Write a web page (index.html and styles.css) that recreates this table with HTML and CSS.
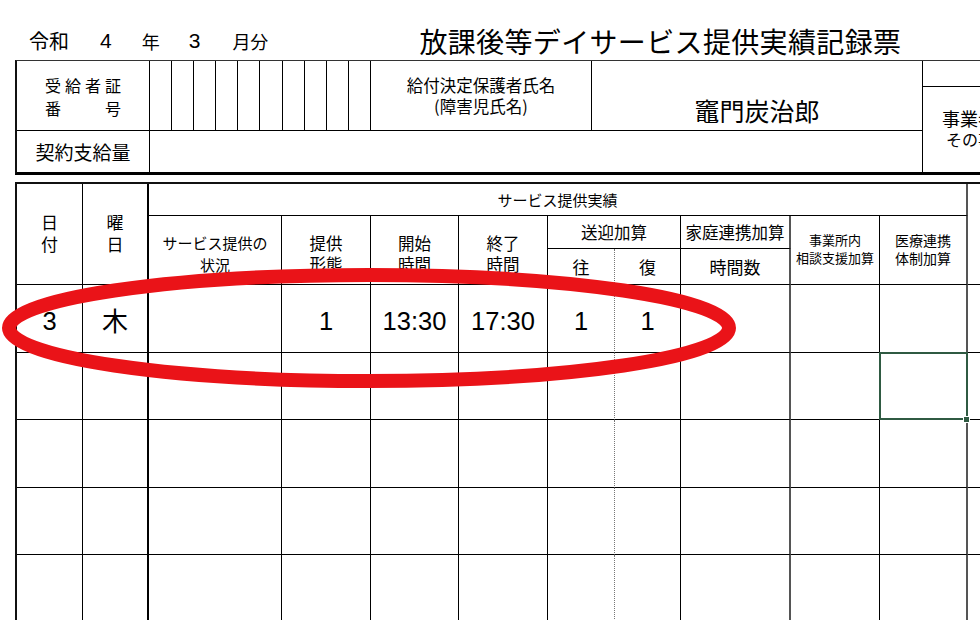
FILE: index.html
```html
<!DOCTYPE html>
<html lang="ja">
<head>
<meta charset="utf-8">
<title>放課後等デイサービス提供実績記録票</title>
<link rel="stylesheet" href="styles.css">
</head>
<body>
<div class="page">
  <div class="titlebar">
    <span class="era">令和</span>
    <span class="num n1">4</span>
    <span class="unit u1">年</span>
    <span class="num n2">3</span>
    <span class="unit u2">月分</span>
    <span class="title">放課後等デイサービス提供実績記録票</span>
  </div>

  <div class="info">
    <div class="cell lbl">
      <div class="just"><span>受</span><span>給</span><span>者</span><span>証</span></div>
      <div class="just"><span>番</span><span>号</span></div>
    </div>
    <div class="cell dg"></div><div class="cell dg"></div><div class="cell dg"></div><div class="cell dg"></div><div class="cell dg"></div>
    <div class="cell dg"></div><div class="cell dg"></div><div class="cell dg"></div><div class="cell dg"></div><div class="cell dg"></div>
    <div class="cell guard"><div>給付決定保護者氏名</div><div>(障害児氏名)</div></div>
    <div class="cell name">竈門炭治郎</div>
    <div class="cell side">
      <div class="side-top"></div>
      <div class="side-body"><div>事業者及び</div><div class="l2">その事業所</div></div>
    </div>
    <div class="cell lbl2">契約支給量</div>
    <div class="cell amount"></div>
  </div>

  <div class="grid">
    <div class="h hday"><div>日</div><div>付</div></div>
    <div class="h hwk"><div>曜</div><div>日</div></div>
    <div class="h hsvc">サービス提供実績</div>
    <div class="h hx"></div>
    <div class="h hst"><div>サービス提供の</div><div>状況</div></div>
    <div class="h h2 col4"><div>提供</div><div>形態</div></div>
    <div class="h h2 col5"><div>開始</div><div>時間</div></div>
    <div class="h h2 col6"><div>終了</div><div>時間</div></div>
    <div class="h hsg">送迎加算</div>
    <div class="h hkt">家庭連携加算</div>
    <div class="h hsm col10"><div>事業所内</div><div>相談支援加算</div></div>
    <div class="h hsm2 col11"><div>医療連携</div><div>体制加算</div></div>
    <div class="h h3 col7">往</div>
    <div class="h h3 col8">復</div>
    <div class="h h3 col9">時間数</div>

    <div class="d num-l">3</div><div class="d k jp-l">木</div><div class="d"></div><div class="d num-l">1</div><div class="d num-l">13:30</div><div class="d num-l">17:30</div><div class="d dt num-l">1</div><div class="d num-l">1</div><div class="d gr"></div><div class="d"></div><div class="d gr"></div><div class="d last"></div>

    <div class="d"></div><div class="d k"></div><div class="d"></div><div class="d"></div><div class="d"></div><div class="d"></div><div class="d dt"></div><div class="d"></div><div class="d gr"></div><div class="d"></div><div class="d gr sel"></div><div class="d last"></div>

    <div class="d"></div><div class="d k"></div><div class="d"></div><div class="d"></div><div class="d"></div><div class="d"></div><div class="d dt"></div><div class="d"></div><div class="d gr"></div><div class="d"></div><div class="d gr"></div><div class="d last"></div>

    <div class="d"></div><div class="d k"></div><div class="d"></div><div class="d"></div><div class="d"></div><div class="d"></div><div class="d dt"></div><div class="d"></div><div class="d gr"></div><div class="d"></div><div class="d gr"></div><div class="d last"></div>

    <div class="d"></div><div class="d k"></div><div class="d"></div><div class="d"></div><div class="d"></div><div class="d"></div><div class="d dt"></div><div class="d"></div><div class="d gr"></div><div class="d"></div><div class="d gr"></div><div class="d last"></div>
  </div>

  <svg class="mark" width="980" height="620" viewBox="0 0 980 620" aria-hidden="true">
    <ellipse cx="369" cy="328" rx="360" ry="53" fill="none" stroke="#ea1318" stroke-width="14"/>
  </svg>
</div>
</body>
</html>
```

FILE: styles.css
```css
* { box-sizing: border-box; }
html, body {
  margin: 0;
  padding: 0;
  width: 980px;
  height: 620px;
  overflow: hidden;
  background: #fff;
}
body {
  font-family: "Liberation Sans", "Noto Sans CJK JP", sans-serif;
  color: #000;
}
.page {
  position: relative;
  width: 980px;
  height: 620px;
  overflow: hidden;
}

/* title line */
.titlebar {
  height: 60px;
  padding: 21px 0 0 29px;
  display: flex;
  align-items: center;
  white-space: nowrap;
}
.era { font-family: "Noto Sans CJK JP", sans-serif; font-size: 20px; }
.unit { font-family: "Noto Sans CJK JP", sans-serif; font-size: 18px; }
.num { font-family: "Liberation Sans", sans-serif; font-size: 21px; }
.n1 { margin-left: 31px; }
.u1 { margin-left: 30px; }
.n2 { margin-left: 29px; }
.u2 { margin-left: 32px; }
.title {
  margin-left: 151px;
  font-family: "Noto Sans CJK JP", sans-serif;
  font-size: 28px;
  letter-spacing: 0.35px;
}

/* info table */
.info {
  margin-left: 15px;
  display: grid;
  grid-template-columns: 133px repeat(10, 22.1px) 221px 331px 200px;
  grid-template-rows: 70px 41px;
  width: max-content;
  border-top: 1px solid #333;
  border-left: 2px solid #111;
  border-bottom: 3px solid #000;
}
.info .cell {
  border-right: 1px solid #000;
  border-bottom: 1px solid #000;
  font-family: "Noto Sans CJK JP", sans-serif;
}
.lbl {
  padding-top: 13px;
  display: flex;
  flex-direction: column;
  align-items: center;
  font-size: 16px;
  line-height: 23px;
}
.just {
  width: 76px;
  display: flex;
  justify-content: space-between;
}
.guard {
  padding-top: 14px;
  text-align: center;
  font-size: 16.5px;
  line-height: 21px;
}
.name {
  padding-top: 34px;
  text-align: center;
  font-size: 25px;
  line-height: 30px;
}
.side {
  grid-column: 14;
  grid-row: 1 / span 2;
  border-right: none !important;
  border-bottom: none !important;
  display: flex;
  flex-direction: column;
  overflow: hidden;
}
.side-top {
  height: 26px;
  border-bottom: 1px solid #000;
}
.side-body {
  flex: 1;
  display: flex;
  flex-direction: column;
  justify-content: center;
  padding-left: 19px;
  padding-bottom: 2px;
  font-size: 18px;
  line-height: 21px;
  white-space: nowrap;
}
.side-body .l2 { padding-left: 4px; font-size: 16px; }
.lbl2 {
  border-bottom: none !important;
  display: flex;
  align-items: center;
  justify-content: center;
  font-size: 19px;
}
.amount {
  grid-column: 2 / 14;
  border-bottom: none !important;
}

/* record grid */
.grid {
  margin-top: 7px;
  margin-left: 15px;
  display: grid;
  grid-template-columns: 66px 66px 133px 89px 88px 89px 67px 66px 110px 89px 88px 132px;
  grid-template-rows: 32px 33px 36px 68px 67px 68px 67px 68px;
  width: max-content;
  border-top: 2px solid #111;
  border-left: 2px solid #111;
}
.h, .d {
  border-right: 1px solid #000;
  border-bottom: 1px solid #000;
  display: flex;
  align-items: center;
  justify-content: center;
  text-align: center;
}
.h {
  flex-direction: column;
  font-family: "Noto Sans CJK JP", sans-serif;
  font-size: 16.5px;
  line-height: 21px;
}
.hday { grid-column: 1; grid-row: 1 / 4; font-size: 17px; line-height: 22px; padding-bottom: 3px; }
.hwk { grid-column: 2; grid-row: 1 / 4; font-size: 17px; line-height: 22px; padding-bottom: 3px; border-right: 2px solid #000; }
.hsvc { grid-column: 3 / 12; grid-row: 1; font-size: 15px; border-right: 2px solid #555; }
.hx { grid-column: 12; grid-row: 1 / 4; border-right: none; }
.hst { grid-column: 3; grid-row: 2 / 4; font-size: 15px; line-height: 22px; padding-top: 7px; }
.h2 { grid-row: 2 / 4; padding-top: 7px; }
.col4 { grid-column: 4; }
.col5 { grid-column: 5; }
.col6 { grid-column: 6; }
.hsg { grid-column: 7 / 9; grid-row: 2; }
.hkt { grid-column: 9; grid-row: 2; border-right: 2px solid #555; font-size: 16.5px; white-space: nowrap; }
.hsm { grid-row: 2 / 4; font-size: 13px; line-height: 18px; padding-bottom: 2px; white-space: nowrap; }
.hsm2 { grid-row: 2 / 4; font-size: 14px; line-height: 18px; padding-bottom: 2px; border-right: 2px solid #555; white-space: nowrap; }
.col10 { grid-column: 10; }
.col11 { grid-column: 11; }
.h3 { grid-row: 3; font-size: 17px; }
.col7 { grid-column: 7; border-right: 1px dotted #777; }
.col8 { grid-column: 8; }
.col9 { grid-column: 9; border-right: 2px solid #555; }

.d.k { border-right: 2px solid #000; }
.d.dt { border-right: 1px dotted #777; }
.d.gr { border-right: 2px solid #555; }
.d.last { border-right: none; }
.num-l {
  font-family: "Liberation Sans", sans-serif;
  font-size: 25.5px;
  padding-top: 5px;
}
.jp-l {
  font-family: "Noto Sans CJK JP", sans-serif;
  font-size: 26px;
  padding-top: 2px;
}

/* selected spreadsheet cell */
.sel { position: relative; }
.sel::before {
  content: "";
  position: absolute;
  left: -1px;
  top: -1px;
  right: -2px;
  bottom: -1px;
  border: 2px solid #2f5a42;
}
.sel::after {
  content: "";
  position: absolute;
  right: -4px;
  bottom: -4px;
  width: 5px;
  height: 5px;
  background: #2f5a42;
  border: 1px solid #fff;
}

/* red hand-drawn circle */
.mark {
  position: absolute;
  left: 0;
  top: 0;
  pointer-events: none;
}
```
